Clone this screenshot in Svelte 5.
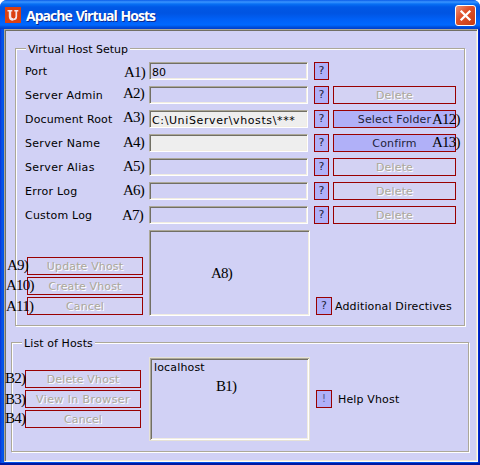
<script>
  const rows = [
    { label: 'Port', value: '80', ls: .1 },
    { label: 'Server Admin', value: '', action: 'Delete', ls: .28 },
    { label: 'Document Root', value: 'C:\\UniServer\\vhosts\\***', lit: true, action: 'Select Folder', on: true, ls: .16 },
    { label: 'Server Name', value: '', lit: true, action: 'Confirm', on: true, ls: .3 },
    { label: 'Server Alias', value: '', action: 'Delete', ls: .34 },
    { label: 'Error Log', value: '', action: 'Delete', ls: .3 },
    { label: 'Custom Log', value: '', action: 'Delete', ls: .2 }
  ];
  const setupButtons = ['Update Vhost', 'Create Vhost', 'Cancel'];
  const hostButtons = ['Delete Vhost', 'View In Browser', 'Cancel'];
  const notes = [
    ['A1)', 124, 64], ['A2)', 123, 85], ['A3)', 123, 109], ['A4)', 123, 134],
    ['A5)', 123, 158], ['A6)', 123, 182], ['A7)', 122, 207], ['A8)', 211, 265],
    ['A9)', 7, 257], ['A10)', 6, 277], ['A11)', 6, 298], ['A12)', 432, 111],
    ['A13)', 432, 134], ['B1)', 216, 378], ['B2)', 5, 370], ['B3)', 5, 391], ['B4)', 5, 410]
  ];
</script>

<div class="window">
  <header>
    <svg class="logo" width="16" height="16" viewBox="0 0 16 16">
      <rect width="16" height="16" fill="#dc4010" />
      <path d="M2.5 3.7h4.8M9.3 3.7h4" fill="none" stroke="#f4e4e8" stroke-width="1.4" />
      <path d="M5 4v5.5q0 3 3.2 3" fill="none" stroke="#f4e4e8" stroke-width="2.4" />
      <path d="M11.3 4v5.5q0 3-3.2 3" fill="none" stroke="#f4e4e8" stroke-width="1.7" />
    </svg>
    <h1>Apache Virtual Hosts</h1>
    <svg class="close" width="21" height="21" viewBox="0 0 21 21">
      <defs>
        <linearGradient id="red" x1="0" y1="0" x2="1" y2="1">
          <stop offset="0" stop-color="#ee9880" /><stop offset=".4" stop-color="#e0522c" /><stop offset="1" stop-color="#c63a10" />
        </linearGradient>
      </defs>
      <rect x=".5" y=".5" width="20" height="20" rx="2.5" fill="url(#red)" stroke="#fff" />
      <path d="M5.7 5.7l9.6 9.6M15.3 5.7l-9.6 9.6" stroke="#fff" stroke-width="2.3" />
    </svg>
  </header>
  <main>
    <section class="setup">
      <h2>Virtual Host Setup</h2>
      <div class="rows">
        {#each rows as r}
          <div class="row">
            <label for={r.label} style="letter-spacing:{r.ls}px">{r.label}</label>
            <div class="field" class:lit={r.lit} class:wide={r.value.length > 5} id={r.label}>{r.value}</div>
            <button class="btn on q">?</button>
            {#if r.action}<button class="btn act" class:on={r.on}>{r.action}</button>{/if}
          </div>
        {/each}
      </div>
      <div class="lower">
        <div class="stack">
          {#each setupButtons as b}<button class="btn">{b}</button>{/each}
        </div>
        <div class="area"></div>
        <div class="help"><button class="btn on q">?</button><span>Additional Directives</span></div>
      </div>
    </section>
    <section class="hosts">
      <h2>List of Hosts</h2>
      <div class="lower">
        <div class="stack">
          {#each hostButtons as b}<button class="btn" class:loose={b.length > 12}>{b}</button>{/each}
        </div>
        <div class="area list">localhost</div>
        <div class="help"><button class="btn on q info">!</button><span>Help Vhost</span></div>
      </div>
    </section>
  </main>
  {#each notes as [text, x, y]}
    <span class="note" style="left:{x}px;top:{y}px">{text}</span>
  {/each}
</div>

<style>
  :global(body) { background: #fff; }
  .window {
    position: relative; width: 480px; height: 465px; box-sizing: border-box;
    display: flex; flex-direction: column; overflow: hidden;
    padding: 0 2px 3px 4px; border-radius: 7px 7px 0 0;
    background: linear-gradient(90deg, #0831d9 0, #0855e8 2px, #0050e6 4px, #0050e6 477px, #0030d8 478px, #0018a8 480px);
    font: 11px/14px "DejaVu Sans", sans-serif; color: #000;
    box-shadow: inset 0 -2px #0019a0;
  }
  header {
    height: 29px; flex: none; box-sizing: border-box; margin: 0 -2px 0 -4px; padding: 1px 4px 0 5px;
    display: flex; align-items: center;
    background: linear-gradient(#0a5be8 0, #3a95ff 2px, #0870f4 4px, #0058e6 7px, #0054e2 13px, #0061f8 20px, #0068ff 25px, #0050dc 27px, #003dcc 29px);
  }
  h1 {
    flex: 1; margin: 1px 0 0 5px; font: bold 14px/20px "Open Sans", "Noto Sans", sans-serif;
    letter-spacing: -.95px; word-spacing: 1px; color: #fff; text-shadow: 1px 1px #0a2a90;
  }
  main {
    flex: 1; box-sizing: border-box; background: #d1d1f5; padding: 17px 0 0 5px;
    border: 1px solid; border-color: #aca899 #fffdf0 #fff #aca899;
    box-shadow: inset 1px 1px #716f64, inset -1px -1px #ece6d8;
  }
  section { position: relative; box-sizing: border-box; border: 1px solid #aca899; box-shadow: 1px 1px #fff, inset 1px 1px #fff; }
  .setup { width: 450px; height: 278px; margin: 1px 0 0 5px; padding: 13px 0 0 9px; }
  .hosts { width: 458px; height: 110px; margin: 16px 0 0 1px; padding: 14px 0 0 13px; }
  h2 { position: absolute; top: -6px; left: 10px; margin: 0; padding: 0 2px; background: #d1d1f5; font: inherit; white-space: nowrap; }
  .hosts h2 { letter-spacing: .1px; }
  .rows { display: flex; flex-direction: column; gap: 6px; }
  .row { display: flex; height: 18px; align-items: stretch; }
  label { width: 124px; line-height: 20px; white-space: nowrap; }
  .field, .area {
    box-sizing: border-box; border: 1px solid; border-color: #aca899 #fff #fff #aca899;
    box-shadow: inset 1px 1px #716f64, inset -1px -1px #f1ede2; padding: 1px 2px;
  }
  .field { width: 159px; line-height: 17px; white-space: nowrap; }
  .wide { letter-spacing: .62px; }
  .lit { background: #eee; }
  .btn {
    box-sizing: border-box; height: 18px; margin: 0; padding: 1px 0 0; border: 1px solid #990000;
    background: #d3d2f3; color: #aca899; text-shadow: 1px 1px #fff; font: inherit; line-height: 16px;
    letter-spacing: .15px; white-space: nowrap;
  }
  .loose { letter-spacing: .4px; }
  .on { background: #b0b0f8; color: #222238; text-shadow: none; }
  .q { width: 15px; margin-left: 6px; padding: 0; }
  .act { width: 123px; margin-left: 4px; }
  .info { color: #556090; }
  .lower { display: flex; }
  .setup .lower { margin: 6px 0 0 2px; }
  .stack { display: flex; flex-direction: column; gap: 2px; width: 116px; padding-top: 27px; }
  .area { width: 161px; height: 86px; margin-left: 6px; }
  .list {
    height: 84px; margin-left: 8px; padding: 3px 4px; letter-spacing: .15px; border-color: #e6e2d6;
    box-shadow: inset 1px 1px #aca899, inset -1px -1px #fff, inset 2px 2px #716f64, inset -2px -2px #f1ede2;
  }
  .help { display: flex; align-items: center; align-self: flex-end; height: 18px; margin-bottom: 1px; }
  .help .q { width: 16px; }
  .help span { margin: 1px 0 0 3px; letter-spacing: .15px; white-space: nowrap; }
  .hosts .stack { padding-top: 13px; }
  .hosts .help { align-self: flex-start; margin-top: 33px; }
  .hosts .help span { margin-left: 6px; }
  .note { position: absolute; font: 15px/17px "Liberation Serif", serif; letter-spacing: -.8px; white-space: nowrap; }
</style>
